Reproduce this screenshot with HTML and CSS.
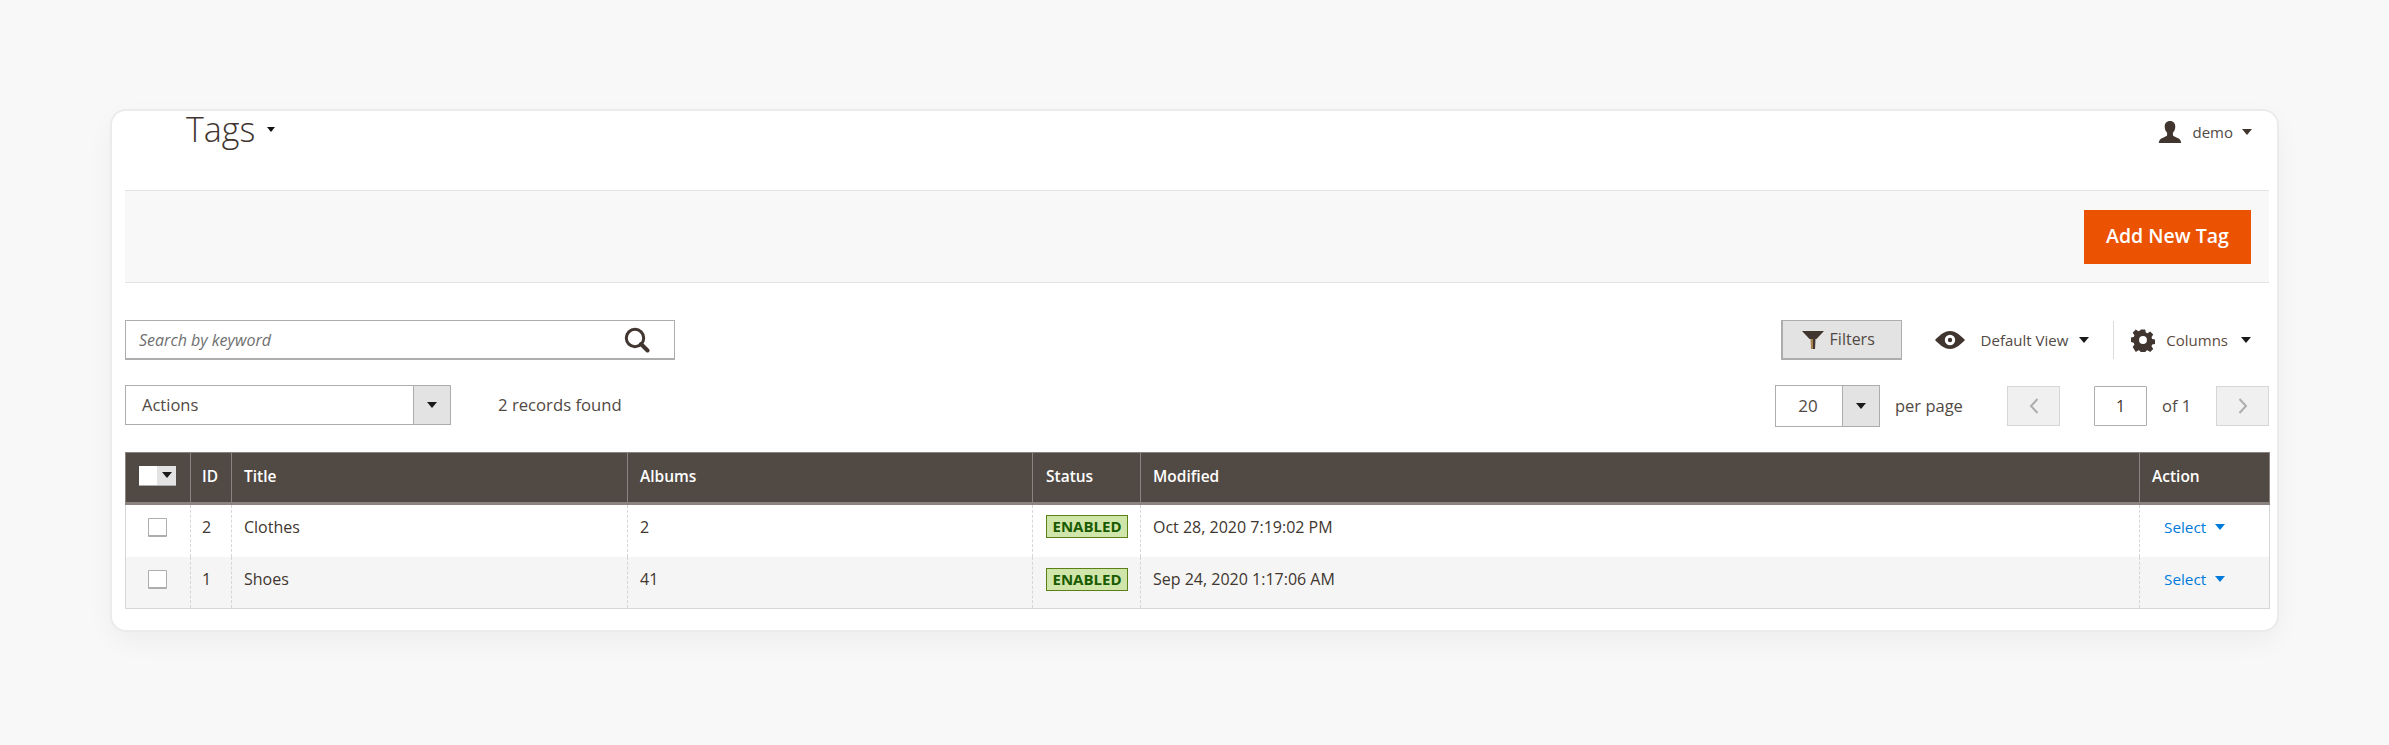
FILE: index.html
```html
<!DOCTYPE html>
<html lang="en">
<head>
<meta charset="utf-8">
<title>Tags</title>
<link rel="stylesheet" href="styles.css">
</head>
<body>
<main class="card">
  <header class="page-head">
    <h1 class="title">Tags<span class="caret caret-title"></span></h1>
    <div class="user">
      <svg class="user-icon" viewBox="0 0 24 22"><path fill="#41362f" d="M12 0c3.4 0 5.3 2.4 5.3 5.6 0 2.6-1 5-2.4 6.2v2.3c0 1 1.5 1.6 3.6 2.4 2.6 1 4.3 1.900 4.700 5.500H.8c.4-3.600 2.100-4.500 4.700-5.500 2.100-.8 3.600-1.400 3.600-2.400v-2.300C7.700 10.600 6.700 8.200 6.700 5.600 6.700 2.400 8.600 0 12 0z"/></svg>
      <span class="user-name">demo</span>
      <span class="caret caret-user"></span>
    </div>
  </header>

  <div class="actions-bar">
    <button class="btn-primary" type="button">Add New Tag</button>
  </div>

  <div class="toolbar">
    <div class="search">
      <span class="search-text">Search by keyword</span>
      <svg class="search-icon" viewBox="0 0 26 26"><circle cx="11" cy="11" r="8.700" fill="none" stroke="#41362f" stroke-width="3"/><path d="M17 17l6.500 6.500" stroke="#41362f" stroke-width="4" stroke-linecap="round"/></svg>
    </div>
    <div class="tools">
      <button class="btn-filters" type="button">
        <svg class="funnel" viewBox="0 0 22 18"><path fill="#41362f" d="M0 0h22l-7.500 8h-7z"/><path fill="#a9834f" d="M8.500 8h2.500v10H9z"/><path fill="#41362f" d="M11 8h2.500L13 18h-2z"/></svg>
        <span>Filters</span>
      </button>
      <div class="view">
        <svg class="eye" viewBox="0 0 30 18"><path fill="#41362f" fill-rule="evenodd" d="M15 0c6 0 10.500 4.500 15 9-4.500 4.500-9 9-15 9S4.500 13.500 0 9C4.500 4.500 9 0 15 0zm0 3.800a5.200 5.200 0 1 0 0 10.400 5.200 5.200 0 0 0 0-10.400zm0 3a2.200 2.200 0 1 1 0 4.400 2.200 2.200 0 0 1 0-4.400z"/></svg>
        <span class="view-text">Default View</span>
        <span class="caret caret-view"></span>
      </div>
      <div class="columns">
        <svg class="gear" viewBox="0 0 24 24"><path fill="#41362f" fill-rule="evenodd" d="M9.500 0h5l.7 3.500 2 .8 3-2 3.500 3.500-2 3 .8 2 3.500.7v5l-3.500.7-.8 2 2 3-3.500 3.500-3-2-2 .8-.7 3.500h-5l-.7-3.500-2-.8-3 2L.2 20l2-3-.8-2-3.500-.7v-5l3.500-.7.8-2-2-3L3.700 0l3 2 2-.8zM12 7.500a4.500 4.500 0 1 0 0 9 4.500 4.500 0 0 0 0-9z" transform="translate(1.500 1.500) scale(.875)"/></svg>
        <span class="columns-text">Columns</span>
        <span class="caret caret-columns"></span>
      </div>
    </div>
  </div>

  <div class="pager-row">
    <div class="select select-actions">
      <span class="select-value">Actions</span>
      <span class="select-btn"><span class="caret"></span></span>
    </div>
    <span class="records">2 records found</span>
    <div class="pager">
      <div class="select select-size">
        <span class="select-value">20</span>
        <span class="select-btn"><span class="caret"></span></span>
      </div>
      <span class="per-page">per page</span>
      <span class="page-btn page-prev"><svg viewBox="0 0 10 16"><path d="M8.500 1L2 8l6.500 7" fill="none" stroke="#adadad" stroke-width="2"/></svg></span>
      <span class="page-input">1</span>
      <span class="page-of">of 1</span>
      <span class="page-btn page-next"><svg viewBox="0 0 10 16"><path d="M1.500 1L8 8l-6.500 7" fill="none" stroke="#adadad" stroke-width="2"/></svg></span>
    </div>
  </div>

  <table class="grid">
    <colgroup>
      <col class="c-check"><col class="c-id"><col class="c-title"><col class="c-albums"><col class="c-status"><col class="c-mod"><col class="c-action">
    </colgroup>
    <thead>
      <tr>
        <th><span class="multi"><span class="multi-box"></span><span class="multi-btn"><span class="caret caret-small"></span></span></span></th>
        <th class="cell-id">ID</th><th>Title</th><th>Albums</th><th class="cell-status">Status</th><th>Modified</th><th>Action</th>
      </tr>
    </thead>
    <tbody>
      <tr class="first">
        <td class="cell-check"><span class="checkbox"></span></td>
        <td class="cell-id">2</td><td>Clothes</td><td>2</td>
        <td class="cell-status"><span class="badge">ENABLED</span></td>
        <td>Oct 28, 2020 7:19:02 PM</td>
        <td class="cell-action"><span class="select-link">Select<span class="caret caret-link"></span></span></td>
      </tr>
      <tr class="alt">
        <td class="cell-check"><span class="checkbox"></span></td>
        <td class="cell-id">1</td><td>Shoes</td><td>41</td>
        <td class="cell-status"><span class="badge">ENABLED</span></td>
        <td>Sep 24, 2020 1:17:06 AM</td>
        <td class="cell-action"><span class="select-link">Select<span class="caret caret-link"></span></span></td>
      </tr>
    </tbody>
  </table>
</main>
</body>
</html>
```

FILE: styles.css
```css
* { box-sizing: border-box; }
html, body { margin: 0; padding: 0; }
body {
  height: 745px;
  background: #f8f8f8;
  font-family: "Open Sans", "Liberation Sans", sans-serif;
  color: #41362f;
  overflow: hidden;
  padding: 111px 0 0 112px;
}
.card {
  width: 2165px;
  height: 519px;
  background: #fff;
  border-radius: 14px;
  padding: 0 8px 0 13px;
  box-shadow: 0 0 0 2px #ebebeb, 0 10px 28px rgba(0, 0, 0, .05);
}
.caret {
  display: inline-block;
  width: 0;
  height: 0;
  border-left: 5px solid transparent;
  border-right: 5px solid transparent;
  border-top: 6px solid #1a1a1a;
}
.page-head {
  height: 79px;
  display: flex;
  justify-content: space-between;
  align-items: flex-start;
}
.title {
  margin: -5px 0 0 61px;
  font-size: 34px;
  font-weight: 300;
  line-height: 46px;
  display: flex;
  align-items: center;
}
.caret-title { border-width: 5px 4.500px 0; margin: 0 0 0 12px; border-top-color: #111; }
.user {
  display: flex;
  align-items: center;
  height: 42px;
  margin-right: 17px;
}
.user-icon { width: 24px; height: 22px; margin-left: -3px; }
.user-name { font-size: 15px; margin-left: 10px; color: #514943; }
.caret-user { margin-left: 9px; border-top-color: #41362f; }

.actions-bar {
  height: 93px;
  background: #f8f8f8;
  border-top: 1px solid #e3e3e3;
  border-bottom: 1px solid #e3e3e3;
  display: flex;
  justify-content: flex-end;
  align-items: center;
  padding-right: 18px;
}
.btn-primary {
  width: 167px;
  height: 54px;
  background: #eb5202;
  border: 0;
  color: #fff;
  font: 600 19.500px "Open Sans", sans-serif;
  padding: 0 0 2px;
}

.toolbar {
  margin-top: 37px;
  height: 40px;
  display: flex;
  justify-content: space-between;
}
.search {
  width: 550px;
  height: 40px;
  border: 1px solid #adadad;
  border-bottom-width: 2px;
  display: flex;
  align-items: center;
  justify-content: space-between;
  padding: 0 24px 0 13px;
}
.search-text { font-size: 16px; font-style: italic; color: #6f6f6f; }
.search-icon { width: 26px; height: 26px; }
.tools { display: flex; align-items: center; padding-right: 18px; }
.btn-filters {
  width: 121px;
  height: 40px;
  background: #e3e3e3;
  border: 2px solid #adadad;
  border-width: 1px 1px 2px 2px;
  display: flex;
  align-items: center;
  padding: 0 0 2px 19px;
  font: 16px "Open Sans", sans-serif;
  color: #514943;
}
.funnel { width: 22px; height: 18px; margin: 2px 6px 0 0; }
.view { display: flex; align-items: center; margin-left: 33px; }
.eye { width: 30px; height: 18px; }
.view-text { font-size: 15px; margin-left: 16px; color: #514943; }
.caret-view { margin-left: 11px; }
.columns {
  display: flex;
  align-items: center;
  margin-left: 24px;
  padding-left: 18px;
  height: 38px;
  border-left: 1px solid #dcdcdc;
}
.gear { width: 24px; height: 24px; margin-left: -1px; }
.columns-text { font-size: 15px; margin: -1px 0 0 11px; color: #5c4a40; }
.caret-columns { margin-left: 13px; }

.pager-row {
  margin-top: 25px;
  height: 42px;
  display: flex;
  align-items: flex-start;
}
.select {
  display: flex;
  height: 40px;
  border: 1px solid #adadad;
  font-size: 16.500px;
}
.select-value { flex: 1; line-height: 37px; color: #514943; }
.select-btn {
  width: 37px;
  background: #e3e3e3;
  border-left: 1px solid #adadad;
  display: flex;
  align-items: center;
  justify-content: center;
}
.select-actions { width: 326px; }
.select-actions .select-value { padding-left: 16px; }
.records { margin-left: 47px; font-size: 16.700px; line-height: 39px; color: #514943; }
.pager { margin-left: auto; display: flex; align-items: flex-start; }
.select-size { width: 105px; height: 42px; border-width: 1.500px; font-size: 17px; }
.select-size .select-value { text-align: center; padding-right: 2px; line-height: 40px; }
.per-page { margin-left: 15px; font-size: 16.500px; line-height: 42px; width: 112px; color: #514943; }
.page-btn {
  width: 53px;
  height: 40px;
  margin-top: 1px;
  background: #f0f0f0;
  border: 1px solid #d6d6d6;
  display: flex;
  align-items: center;
  justify-content: center;
}
.page-btn svg { width: 10px; height: 16px; }
.page-input {
  width: 53px;
  height: 40px;
  margin: 1px 0 0 34px;
  border: 1px solid #adadad;
  border-radius: 1px;
  text-align: center;
  font-size: 16px;
  line-height: 38px;
}
.page-of { margin-left: 15px; width: 54px; font-size: 16.500px; line-height: 42px; color: #514943; }

.grid {
  margin-top: 25px;
  width: 2144px;
  table-layout: fixed;
  border-collapse: collapse;
  font-size: 16px;
}
.c-check { width: 65px; }
.c-id { width: 41px; }
.c-title { width: 396px; }
.c-albums { width: 405px; }
.c-status { width: 108px; }
.c-mod { width: 999px; }
.c-action { width: 130px; }
.grid th {
  height: 51px;
  background: #514943;
  color: #fff;
  font-weight: 600;
  text-align: left;
  padding: 0 12px 4px;
  border: 1px solid #8a837f;
  border-bottom-width: 3px;
  font-size: 15.500px;
}
.grid td {
  height: 53px;
  padding: 0 12px 6px;
  border-left: 1px dashed #d6d6d6;
  border-right: 1px dashed #d6d6d6;
  background: #fff;
  color: #41362f;
}
.grid tr.first td { padding-bottom: 8px; }
.grid tr.alt td { height: 52px; background: #f5f5f5; border-bottom: 1px solid #d6d6d6; }
.grid td:first-child { border-left: 1px solid #d6d6d6; }
.grid td:last-child { border-right: 1px solid #d6d6d6; }
.grid th.cell-status, .grid td.cell-status { padding-left: 13px; padding-right: 10px; }
.grid th.cell-id, .grid td.cell-id { padding-left: 11px; padding-right: 6px; }
.multi { display: flex; width: 37px; height: 20px; margin-left: 1px; border-bottom: 1px solid #adadad; }
.multi-box { width: 18px; background: #fff; }
.multi-btn { flex: 1; background: #e3e3e3; display: flex; align-items: center; justify-content: center; }
.caret-small { border-width: 6px 5px 0; }
.cell-check { text-align: center; }
.grid td.cell-check { padding-left: 10px; }
.checkbox {
  display: block;
  width: 19px;
  height: 19px;
  margin: 1px auto 0;
  background: #fff;
  border: 1px solid #adadad;
  border-bottom-width: 2px;
  border-radius: 1px;
}
.badge {
  display: block;
  width: 82px;
  height: 23px;
  background: #d0e5a9;
  border: 1px solid #5b8116;
  color: #185b00;
  font-size: 15px;
  font-weight: 700;
  line-height: 21px;
  text-align: center;
}
.grid td.cell-action { padding-left: 24px; }
.select-link { color: #007bdb; font-size: 15.300px; display: flex; align-items: center; }
.caret-link { margin-left: 9px; border-top-color: #007bdb; }
```
